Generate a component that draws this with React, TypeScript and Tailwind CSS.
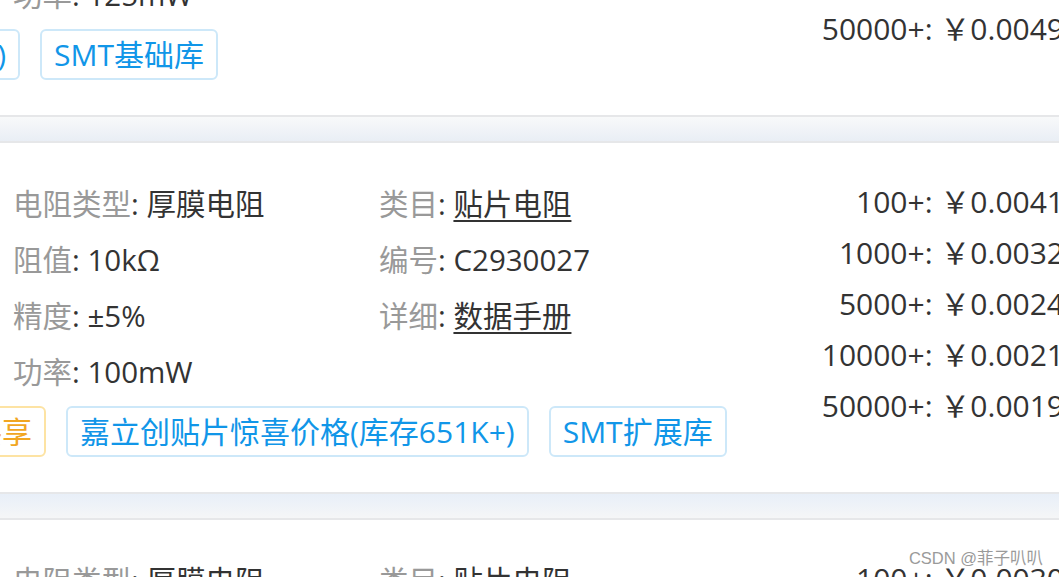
import type { ReactNode } from "react";

type Prop = { label: string; value: string; link?: boolean };
type Tag = { text: string; tone: "blue" | "orange" };

interface CardData {
  col1: Prop[];
  col2: Prop[];
  prices: { qty: string; price: string }[];
  clipWidth: number;
  clipped: Tag[];
  tags: Tag[];
}

const cards: CardData[] = [
  {
    col1: [
      { label: "电阻类型", value: "厚膜电阻" },
      { label: "阻值", value: "10kΩ" },
      { label: "精度", value: "±1%" },
      { label: "功率", value: "125mW" },
    ],
    col2: [
      { label: "类目", value: "贴片电阻", link: true },
      { label: "编号", value: "C25744" },
      { label: "详细", value: "数据手册", link: true },
    ],
    prices: [
      { qty: "100+", price: "0.0082" },
      { qty: "1000+", price: "0.0066" },
      { qty: "5000+", price: "0.0058" },
      { qty: "10000+", price: "0.0053" },
      { qty: "50000+", price: "0.0049" },
    ],
    clipWidth: 20,
    clipped: [{ text: "嘉立创贴片惊喜价格(库存1.2M+)", tone: "blue" }],
    tags: [{ text: "SMT基础库", tone: "blue" }],
  },
  {
    col1: [
      { label: "电阻类型", value: "厚膜电阻" },
      { label: "阻值", value: "10kΩ" },
      { label: "精度", value: "±5%" },
      { label: "功率", value: "100mW" },
    ],
    col2: [
      { label: "类目", value: "贴片电阻", link: true },
      { label: "编号", value: "C2930027" },
      { label: "详细", value: "数据手册", link: true },
    ],
    prices: [
      { qty: "100+", price: "0.0041" },
      { qty: "1000+", price: "0.0032" },
      { qty: "5000+", price: "0.0024" },
      { qty: "10000+", price: "0.0021" },
      { qty: "50000+", price: "0.0019" },
    ],
    clipWidth: 46,
    clipped: [{ text: "库存共享", tone: "orange" }],
    tags: [
      { text: "嘉立创贴片惊喜价格(库存651K+)", tone: "blue" },
      { text: "SMT扩展库", tone: "blue" },
    ],
  },
  {
    col1: [
      { label: "电阻类型", value: "厚膜电阻" },
      { label: "阻值", value: "10kΩ" },
      { label: "精度", value: "±1%" },
      { label: "功率", value: "100mW" },
    ],
    col2: [
      { label: "类目", value: "贴片电阻", link: true },
      { label: "编号", value: "C2907002" },
      { label: "详细", value: "数据手册", link: true },
    ],
    prices: [
      { qty: "100+", price: "0.0030" },
      { qty: "1000+", price: "0.0024" },
      { qty: "5000+", price: "0.0019" },
      { qty: "10000+", price: "0.0016" },
      { qty: "50000+", price: "0.0014" },
    ],
    clipWidth: 46,
    clipped: [{ text: "库存共享", tone: "orange" }],
    tags: [{ text: "SMT扩展库", tone: "blue" }],
  },
];

function TagPill({ tag }: { tag: Tag }) {
  const tone =
    tag.tone === "blue"
      ? "border-[#cde8f9] text-[#1196e8]"
      : "border-[#fde3a3] text-[#f1a622]";
  return (
    <span className={`flex h-[51px] shrink-0 items-center whitespace-nowrap rounded-[6px] border-2 bg-white px-[12px] ${tone}`}>
      {tag.text}
    </span>
  );
}

function PropRow({ p }: { p: Prop }) {
  return (
    <div className="h-[56px] whitespace-nowrap text-[29.5px] leading-[56px]">
      <span className="text-[#999]">{p.label}</span>
      <span className="text-[#333]">: </span>
      {p.link ? (
        <span className="text-[#333] underline decoration-2 underline-offset-[5px]">{p.value}</span>
      ) : (
        <span className="text-[#333]">{p.value}</span>
      )}
    </div>
  );
}

function Card({ data }: { data: CardData }) {
  return (
    <div className="flex h-[349px] bg-white pt-[33px]">
      <div className="flex min-w-0 flex-1 flex-col">
        <div className="flex pl-[13px]">
          <div className="w-[366px]">
            {data.col1.map(p => <PropRow key={p.label} p={p} />)}
          </div>
          <div>
            {data.col2.map(p => <PropRow key={p.label} p={p} />)}
          </div>
        </div>
        <div className="mt-[6px] flex gap-[20px]">
          <div className="flex shrink-0 justify-end overflow-hidden" style={{ width: data.clipWidth }}>
            {data.clipped.map(t => <TagPill key={t.text} tag={t} />)}
          </div>
          {data.tags.map(t => <TagPill key={t.text} tag={t} />)}
        </div>
      </div>
      <div className="-mr-[5px] flex shrink-0 flex-col items-end text-[#333]">
        {data.prices.map(r => (
          <div key={r.qty} className="h-[51px] whitespace-nowrap leading-[51px]">
            {r.qty}: ￥{r.price}
          </div>
        ))}
      </div>
    </div>
  );
}

function Separator({ children, flip }: { children?: ReactNode; flip?: boolean }) {
  return (
    <div
      className={`h-[28px] border-y-2 border-[#e6e7e9] bg-linear-to-b ${
        flip ? "from-[#e8eff8] to-[#f5f6f7]" : "from-[#f8f9fa] to-[#e9eef5]"
      }`}
    >
      {children}
    </div>
  );
}

export default function App() {
  return (
    <div className="relative h-[577px] w-full overflow-hidden bg-white font-['Open_Sans','Noto_Sans_CJK_SC',sans-serif] text-[30px]">
      <div className="-mt-[234px]">
        <Card data={cards[0]} />
        <Separator />
        <Card data={cards[1]} />
        <Separator flip />
        <Card data={cards[2]} />
      </div>
      <div className="absolute bottom-[9px] right-[16px] font-['Liberation_Sans','Noto_Sans_CJK_SC',sans-serif] text-[16.5px] leading-[20px] text-[#9a9a9a] [text-shadow:0_0_2px_#fff]">
        CSDN @菲子叭叭
      </div>
    </div>
  );
}
